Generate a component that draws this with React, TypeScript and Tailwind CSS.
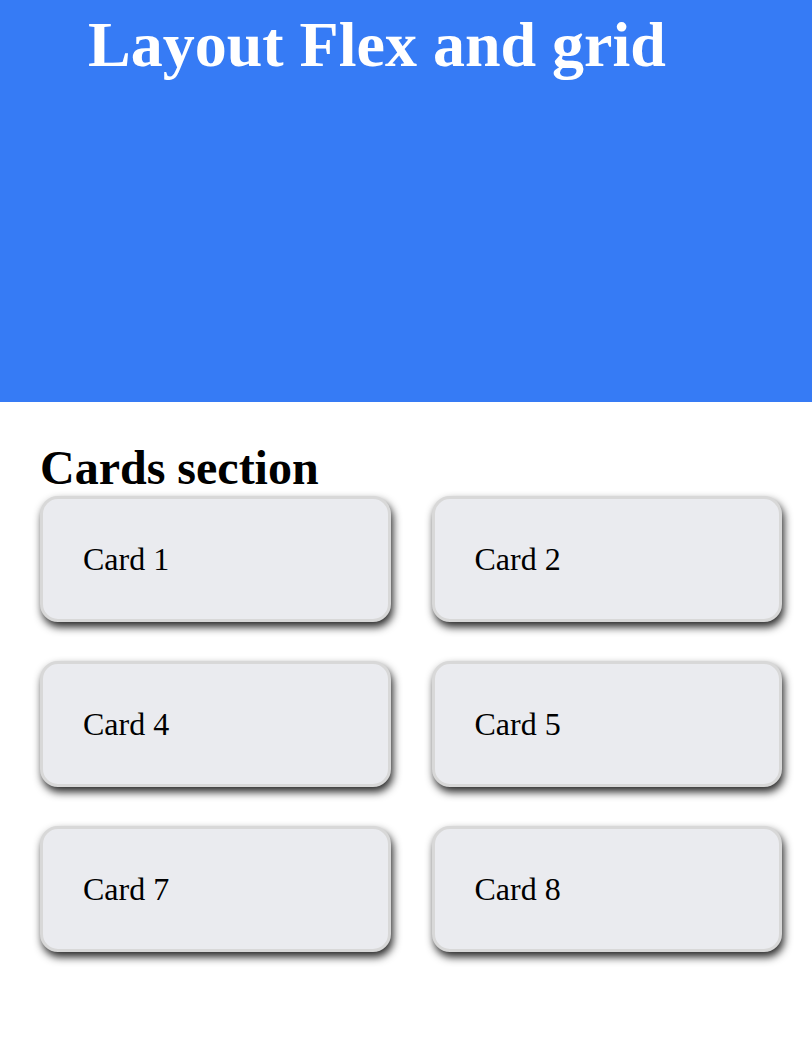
const cards = ['Card 1', 'Card 2', 'Card 4', 'Card 5', 'Card 7', 'Card 8'];

const App = () => {
    return (
        <div className="min-h-[1048px] bg-white font-['Liberation_Serif','Times_New_Roman',serif] text-black">
            <header className="h-[402px] bg-[#367bf5] pl-[88px] pt-3">
                <h1 className="text-[64px] font-bold leading-[66px] text-white">Layout Flex and grid</h1>
            </header>

            <section className="pl-10 pr-[30px] pt-[42px]">
                <h2 className="text-[48px] font-bold leading-[48px]">Cards section</h2>
                <div className="mt-1 grid grid-cols-2 gap-x-[41px] gap-y-[39px]">
                    {cards.map((card) => (
                        <div
                            key={card}
                            className="flex h-[126px] items-center rounded-[18px] border-[3px] border-[#d8d8d8] bg-[#eaebef] px-10 shadow-[2px_5px_8px_rgba(0,0,0,0.85)]"
                        >
                            <p className="text-[32px]">{card}</p>
                        </div>
                    ))}
                </div>
            </section>
        </div>
    );
};

export default App;
